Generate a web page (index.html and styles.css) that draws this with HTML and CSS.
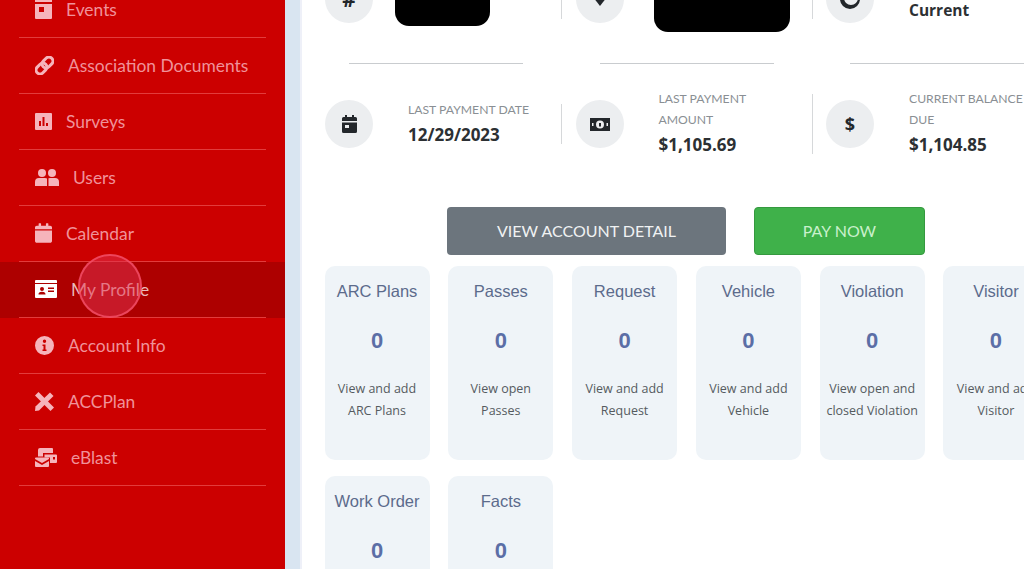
FILE: index.html
```html
<!DOCTYPE html>
<html lang="en">
<head>
  <meta charset="UTF-8" />
  <title>Account Dashboard</title>
  <link rel="stylesheet" href="styles.css">
</head>
<body>
  <aside class="sidebar">
    <ul class="menu">
      <li><a href="#">
        <svg class="icon" width="17" height="20" viewBox="0 0 17 20"><path fill-rule="evenodd" d="M1 0h15a1 1 0 0 1 1 1v2H0V1a1 1 0 0 1 1-1zM0 5h17v14a1 1 0 0 1-1 1H1a1 1 0 0 1-1-1zm4 3v5h5V8z"/></svg>
        Events</a></li>
      <li><a href="#">
        <svg class="icon" width="19" height="19" viewBox="0 0 19 19"><g fill="none" stroke-width="3"><rect class="line" x="6.500" y="2.500" width="12" height="8" rx="4" transform="rotate(-45 12.500 6.500)"/><rect class="line" x="0.500" y="8.500" width="12" height="8" rx="4" transform="rotate(-45 6.500 12.500)"/></g></svg>
        Association Documents</a></li>
      <li><a href="#">
        <svg class="icon" width="17" height="17" viewBox="0 0 17 17"><path fill-rule="evenodd" d="M1 0h15a1 1 0 0 1 1 1v15a1 1 0 0 1-1 1H1a1 1 0 0 1-1-1V1a1 1 0 0 1 1-1zm3 8v5h2V8zm3.500-4v9h2V4zM11 10v3h2v-3z"/></svg>
        Surveys</a></li>
      <li><a href="#">
        <svg class="icon" width="24" height="17" viewBox="0 0 24 17"><circle cx="7" cy="4" r="4"/><circle cx="17" cy="4" r="4"/><path d="M0 17v-4a4 4 0 0 1 4-4h6a4 4 0 0 1 2 .6V17zM13.500 17V9.300A4 4 0 0 1 15 9h5a4 4 0 0 1 4 4v4z"/></svg>
        Users</a></li>
      <li><a href="#">
        <svg class="icon" width="17" height="20" viewBox="0 0 448 512"><path d="M400 64h-48V12c0-6.600-5.400-12-12-12h-40c-6.600 0-12 5.400-12 12v52H160V12c0-6.600-5.400-12-12-12h-40c-6.600 0-12 5.400-12 12v52H48C21.500 64 0 85.500 0 112v48h448v-48c0-26.500-21.500-48-48-48zM0 464c0 26.500 21.500 48 48 48h352c26.500 0 48-21.500 48-48V192H0z"/></svg>
        Calendar</a></li>
      <li class="active"><a href="#">
        <svg class="icon" width="22" height="18" viewBox="0 0 22 18"><path fill-rule="evenodd" d="M1 0h20a1 1 0 0 1 1 1v16a1 1 0 0 1-1 1H1a1 1 0 0 1-1-1V1a1 1 0 0 1 1-1zm-1 3v1h22V3zm7 4a2 2 0 1 0 0 4 2 2 0 0 0 0-4zm-3.500 7.500h7c0-1.800-1-2.800-3.500-2.800s-3.500 1-3.500 2.800zM13 7.500V9h6V7.500zm0 3V12h6v-1.500z"/></svg>
        My Profile</a></li>
      <li><a href="#">
        <svg class="icon" width="19" height="19" viewBox="0 0 19 19"><path fill-rule="evenodd" d="M9.500 0a9.500 9.500 0 1 1 0 19 9.500 9.500 0 0 1 0-19zm0 3.500a1.700 1.700 0 1 0 0 3.400 1.700 1.700 0 0 0 0-3.400zM7.500 8.500V10h1v3.500h-1V15h4v-1.500h-1v-5z"/></svg>
        Account Info</a></li>
      <li><a href="#">
        <svg class="icon" width="19" height="19" viewBox="0 0 19 19"><path d="M3.500 0 19 15.500 15.500 19 0 3.500z"/><path d="M15 .5l3.500 3.500L4 18.500 0 19l.5-4.500z"/></svg>
        ACCPlan</a></li>
      <li><a href="#">
        <svg class="icon" width="22" height="19" viewBox="0 0 22 19"><path d="M5 0h12a1 1 0 0 1 1 1v4H8v3.500H3V2a2 2 0 0 1 2-2z"/><path fill-rule="evenodd" d="M9.500 6.500H21a1 1 0 0 1 1 1V14a1 1 0 0 1-1 1h-6V9.500H9.500zM18 9v2.500h2V9z"/><path d="M1 9.500h12a1 1 0 0 1 1 1v.5l-7 4-7-4v-.5a1 1 0 0 1 1-1zM0 13l7 4 7-4v5a1 1 0 0 1-1 1H1a1 1 0 0 1-1-1z"/></svg>
        eBlast</a></li>
    </ul>
    <span class="tap-mark"></span>
  </aside>

  <div class="strip"></div>

  <main class="content">
    <section class="stats">
      <div class="stat">
        <span class="stat-icon stat-hash"><b>#</b></span>
        <span class="redact redact-short"></span>
        <span class="stat-sep"></span>
      </div>
      <div class="stat">
        <span class="stat-icon"><svg width="14" height="16" viewBox="0 0 14 16"><path d="M0 0h14v6L7 15 0 6z"/></svg></span>
        <span class="redact redact-wide"></span>
        <span class="stat-sep"></span>
      </div>
      <div class="stat">
        <span class="stat-icon"><svg width="20" height="20" viewBox="0 0 20 20"><path fill-rule="evenodd" d="M10 0a10 10 0 0 1 0 20A10 10 0 0 1 10 0zM4 9a7 7 0 0 0 14 0A7 7 0 0 0 4 9z"/></svg></span>
        <div class="stat-text">
          <p class="stat-value stat-value-low">Current</p>
        </div>
      </div>

      <hr class="rule"><hr class="rule"><hr class="rule">

      <div class="stat">
        <span class="stat-icon"><svg width="15" height="18" viewBox="0 0 15 18"><path fill-rule="evenodd" d="M3 0h2v2h5V0h2v2h1.500A1.500 1.500 0 0 1 15 3.500V6H0V3.500A1.500 1.500 0 0 1 1.500 2H3zM0 7.500h15v9a1.500 1.500 0 0 1-1.500 1.500h-12A1.500 1.500 0 0 1 0 16.500zM3 10v3h4v-3z"/></svg></span>
        <div class="stat-text">
          <p class="stat-label">LAST PAYMENT DATE</p>
          <p class="stat-value">12/29/2023</p>
        </div>
        <span class="stat-sep"></span>
      </div>
      <div class="stat">
        <span class="stat-icon"><svg width="20" height="13" viewBox="0 0 20 13"><path fill-rule="evenodd" d="M0 0h20v13H0zm10 2.500a4 4 0 1 0 0 8 4 4 0 0 0 0-8zM9 5h2v3.500H9zM2 5v3h1.500V5zm14.500 0v3H18V5z"/></svg></span>
        <div class="stat-text">
          <p class="stat-label">LAST PAYMENT AMOUNT</p>
          <p class="stat-value">$1,105.69</p>
        </div>
        <span class="stat-sep stat-sep-tall"></span>
      </div>
      <div class="stat">
        <span class="stat-icon"><b>$</b></span>
        <div class="stat-text">
          <p class="stat-label">CURRENT BALANCE DUE</p>
          <p class="stat-value">$1,104.85</p>
        </div>
      </div>
    </section>

    <div class="actions">
      <a class="btn btn-grey" href="#">VIEW ACCOUNT DETAIL</a>
      <a class="btn btn-green" href="#">PAY NOW</a>
    </div>

    <section class="cards">
      <div class="card"><h3>ARC Plans</h3><strong>0</strong><p>View and add<br>ARC Plans</p></div>
      <div class="card"><h3>Passes</h3><strong>0</strong><p>View open<br>Passes</p></div>
      <div class="card"><h3>Request</h3><strong>0</strong><p>View and add<br>Request</p></div>
      <div class="card"><h3>Vehicle</h3><strong>0</strong><p>View and add<br>Vehicle</p></div>
      <div class="card"><h3>Violation</h3><strong>0</strong><p>View open and<br>closed Violation</p></div>
      <div class="card"><h3>Visitor</h3><strong>0</strong><p>View and add<br>Visitor</p></div>
      <div class="card"><h3>Work Order</h3><strong>0</strong></div>
      <div class="card"><h3>Facts</h3><strong>0</strong></div>
    </section>
  </main>
</body>
</html>
```

FILE: styles.css
```css
* {
  box-sizing: border-box;
}

body {
  margin: 0;
  display: flex;
  width: 1024px;
  height: 569px;
  overflow: hidden;
  background: #fff;
  font-family: 'Open Sans', sans-serif;
}

.sidebar {
  position: relative;
  width: 285px;
  height: 569px;
  flex-shrink: 0;
  background: #cc0000;
  overflow: hidden;
}

.menu {
  list-style: none;
  margin: -18px 0 0;
  padding: 0;
}

.menu li {
  height: 56px;
  padding: 0 19px;
}

.menu li.active {
  background: #ad0000;
}

.menu a {
  display: flex;
  align-items: center;
  gap: 14px;
  height: 56px;
  padding: 0 0 1px 16px;
  border-bottom: 1px solid #e23c3c;
  color: #f0929a;
  font-family: 'Lato', sans-serif;
  font-size: 17.400px;
  text-decoration: none;
}

.menu .active a {
  color: #e8bcbc;
}

.icon {
  flex-shrink: 0;
  fill: #f6b4bb;
}

.icon .line {
  stroke: #f6b4bb;
}

.active .icon {
  fill: #fff;
}

.tap-mark {
  position: absolute;
  left: 78px;
  top: 254px;
  width: 64px;
  height: 64px;
  border-radius: 50%;
  background: rgba(225, 50, 80, 0.5);
  border: 2px solid rgba(245, 80, 105, 0.8);
}

.strip {
  width: 15px;
  flex-shrink: 0;
  background: #d9e5f1;
}

.content {
  flex: 1;
  min-width: 0;
  overflow: hidden;
  box-shadow: inset 2px 0 0 #eef0f8;
}

.stats {
  display: grid;
  grid-template-columns: repeat(3, 250.500px);
  margin: -61px 0 0 25px;
}

.stat {
  position: relative;
  display: flex;
  align-items: center;
  height: 120px;
}

.stat-icon {
  display: flex;
  align-items: center;
  justify-content: center;
  width: 48px;
  height: 48px;
  flex-shrink: 0;
  border-radius: 50%;
  background: #eceef0;
  color: #23272b;
  font-size: 18px;
  fill: #23272b;
}

.stat-hash {
  font-size: 21px;
}

.stat-text {
  width: 130px;
  margin-left: 35px;
  padding-bottom: 4px;
}

.stat-label {
  margin: 0;
  color: #8a8f94;
  font-family: 'Lato', sans-serif;
  font-size: 12.200px;
  line-height: 21px;
}

.stat-value {
  margin: 3px 0 0;
  color: #2c3033;
  font-size: 17px;
  font-weight: 700;
  line-height: 23px;
}

.stat-value-low {
  margin-top: 26px;
  font-size: 15.500px;
}

.stat-sep {
  position: absolute;
  left: 236px;
  top: 40px;
  width: 1px;
  height: 40px;
  background: #d6d8da;
}

.stat-sep-tall {
  top: 30px;
  height: 60px;
}

.redact {
  position: absolute;
  top: 0;
  bottom: 33px;
  background: #000;
  border-radius: 0 0 14px 14px;
}

.redact-short {
  left: 70px;
  width: 95px;
}

.redact-wide {
  left: 78px;
  bottom: 27px;
  width: 136px;
}

.rule {
  width: 174px;
  height: 1px;
  margin: 4px 0 0 24px;
  border: 0;
  background: #c9cccf;
}

.actions {
  display: flex;
  gap: 28px;
  margin: 23px 0 0 147px;
}

.btn {
  display: flex;
  align-items: center;
  justify-content: center;
  height: 48px;
  padding-bottom: 2px;
  border-radius: 4px;
  font-family: 'Lato', sans-serif;
  font-size: 16px;
  text-decoration: none;
}

.btn-grey {
  width: 279px;
  background: #6c757d;
  color: #f0f2f3;
}

.btn-green {
  width: 171px;
  background: #3fb14a;
  color: #c9f0cc;
  border: 1px solid #35993f;
}

.cards {
  display: grid;
  grid-template-columns: repeat(6, 105px);
  grid-auto-rows: 194px;
  gap: 16px 18.800px;
  margin: 11px 0 0 24.500px;
}

.card {
  padding-top: 15px;
  border-radius: 10px;
  background: #eff4f8;
  text-align: center;
}

.card h3 {
  margin: 0;
  color: #5c6b8c;
  font-family: 'Liberation Sans', sans-serif;
  font-size: 16.500px;
  font-weight: 400;
  line-height: 20px;
}

.card strong {
  display: block;
  margin-top: 27px;
  color: #5b6ea6;
  font-family: 'Liberation Sans', sans-serif;
  font-size: 22px;
  line-height: 26px;
}

.card p {
  margin: 24px 0 0;
  color: #555b60;
  font-family: 'Open Sans', sans-serif;
  font-size: 12.500px;
  line-height: 22px;
  white-space: nowrap;
}
```
